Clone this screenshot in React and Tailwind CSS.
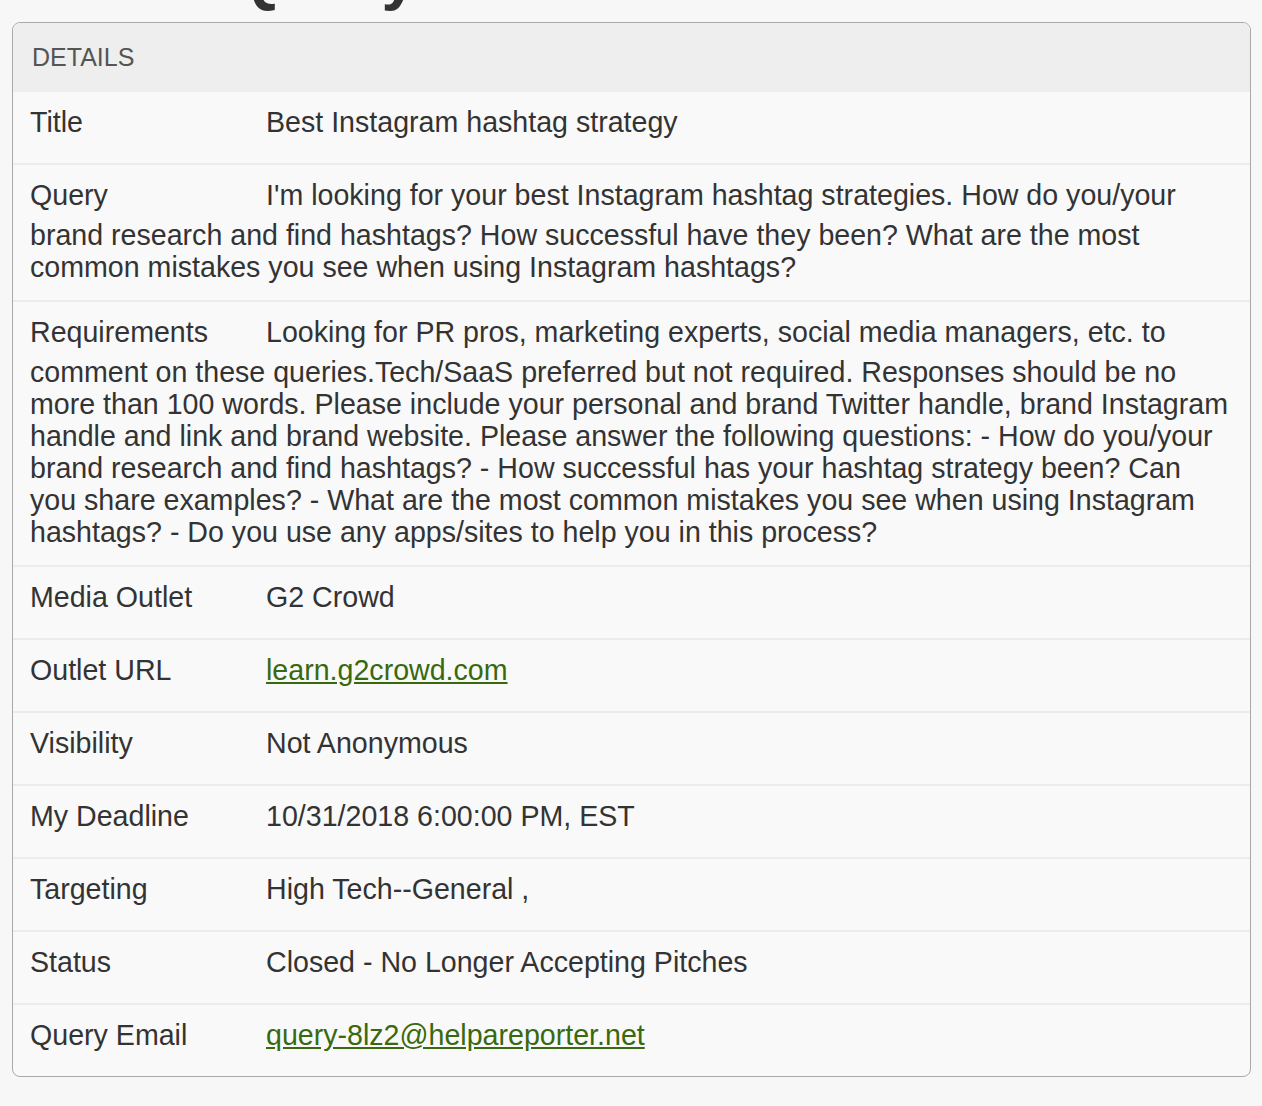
export default function App() {
  const rows = [
    ["Title", "Best Instagram hashtag strategy"],
    ["Query", "I'm looking for your best Instagram hashtag strategies. How do you/your brand research and find hashtags? How successful have they been? What are the most common mistakes you see when using Instagram hashtags?"],
    ["Requirements", "Looking for PR pros, marketing experts, social media managers, etc. to comment on these queries.Tech/SaaS preferred but not required. Responses should be no more than 100 words. Please include your personal and brand Twitter handle, brand Instagram handle and link and brand website. Please answer the following questions: - How do you/your brand research and find hashtags? - How successful has your hashtag strategy been? Can you share examples? - What are the most common mistakes you see when using Instagram hashtags? - Do you use any apps/sites to help you in this process?"],
    ["Media Outlet", "G2 Crowd"],
    ["Outlet URL", "learn.g2crowd.com", true],
    ["Visibility", "Not Anonymous"],
    ["My Deadline", "10/31/2018 6:00:00 PM, EST"],
    ["Targeting", "High Tech--General ,"],
    ["Status", "Closed - No Longer Accepting Pitches"],
    ["Query Email", "query-8lz2@helpareporter.net", true],
  ];
  return (
    <div className="min-h-[1106px] bg-[#f7f7f7] overflow-hidden" style={{ fontFamily: '"Liberation Sans", Arial, sans-serif' }}>
      <div className="h-[22px] relative overflow-hidden">
        <div className="absolute left-[232px] top-[-56px] text-[64px] font-bold text-[#333] leading-none">Query</div>
      </div>
      <div className="mx-[12px] w-[1239px] border-[1.5px] border-[#a9a9a9] rounded-[8px] bg-[#f9f9f9] overflow-hidden">
        <div className="h-[69px] bg-[#eeeeee] px-[19px] flex items-center text-[25px] text-[#555]">DETAILS</div>
        {rows.map(([k, v, link], i) => (
          <div key={k} className={`px-[17px] pt-[14px] pb-[17px] text-[28.6px] leading-[32px] text-[#333] ${i ? "border-t-2 border-[#ececec]" : ""}`}>
            <span className="inline-block w-[236px] pb-[8px]">{k}</span>
            {link ? <span className="text-[#38690f] underline">{v}</span> : v}
          </div>
        ))}
      </div>
    </div>
  );
}
